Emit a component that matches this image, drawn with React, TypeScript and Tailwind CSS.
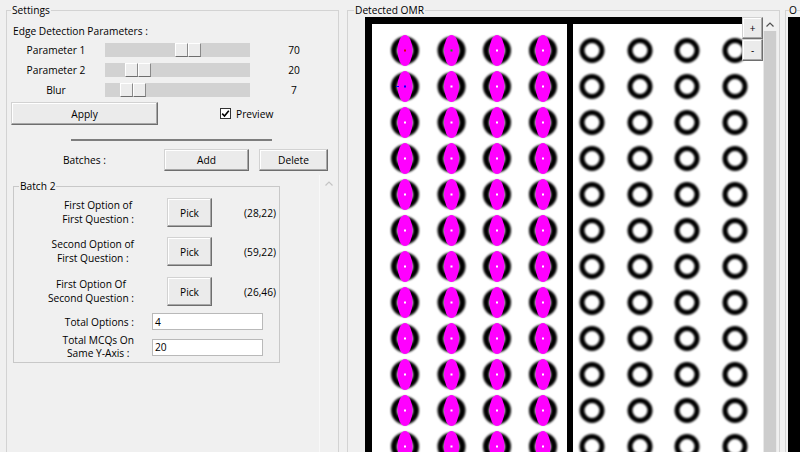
import React from "react";

const btn =
  "flex items-center justify-center bg-[#ebebeb] border border-t-[#d2d2d2] border-l-[#d2d2d2] border-r-[#6e6e6e] border-b-[#6e6e6e] shadow-[inset_-1px_-1px_0_#a8a8a8,inset_1px_1px_0_#ffffff]";

// one trackbar row: label / track with thumb / value
function SliderRow({ label, offset, value }: { label: string; offset: number; value: number }) {
  return (
    <div className="flex h-[20px] items-center">
      <div className="w-[98px] text-center">{label}</div>
      <div className="flex h-[14px] w-[145px] bg-[#d2d2d2]">
        <div className="flex h-full w-[26px]" style={{ marginLeft: offset }}>
          <span className="flex-1 border border-t-white border-l-white border-r-[#8a8a8a] border-b-[#6e6e6e] bg-[#ececec]" />
          <span className="flex-1 border border-t-white border-l-white border-r-[#8a8a8a] border-b-[#6e6e6e] bg-[#ececec]" />
        </div>
      </div>
      <div className="flex-1 text-center">{value}</div>
    </div>
  );
}

function PickRow({ lines, coord, mt }: { lines: string[]; coord: string; mt: string }) {
  return (
    <div className={`flex h-[29px] items-center ${mt}`}>
      <div className="w-[120px] text-right">
        <span className="inline-block text-center leading-[13.5px]">
          {lines.map((l) => (
            <div key={l}>{l}</div>
          ))}
        </span>
      </div>
      <button className={`${btn} ml-[33px] h-[29px] w-[45px]`}>Pick</button>
      <div className="w-[64px] text-right">{coord}</div>
    </div>
  );
}

// the detected sheet, drawn as an image
function OmrSheet() {
  const rows = Array.from({ length: 12 }, (_, i) => 33.5 + 36 * i);
  const leftCols = [40, 86.5, 132, 178];
  const rightCols = [227, 275, 322, 370];
  return (
    <svg width="398" height="440" viewBox="0 0 398 440" className="block">
      <defs>
        <filter id="soft" x="-30%" y="-30%" width="160%" height="160%">
          <feGaussianBlur stdDeviation="1.2" />
        </filter>
      </defs>
      <rect width="398" height="440" fill="#ffffff" />
      <rect x="0" y="0" width="398" height="7" fill="#000" />
      <rect x="0" y="0" width="7" height="440" fill="#000" />
      <rect x="202" y="0" width="6" height="440" fill="#000" />
      {rows.map((cy, r) => (
        <g key={r}>
          {leftCols.map((cx, c) => (
            <g key={c}>
              <circle cx={cx} cy={cy} r="11" fill="none" stroke="#000" strokeWidth="6" filter="url(#soft)" />
              <ellipse cx={cx} cy={cy} rx="7.5" ry="15.5" fill="#ff00ff" />
              <rect
                x={cx - 1}
                y={cy - 1}
                width="2"
                height="2"
                fill={r === 0 && c === 0 ? "#e00000" : r === 0 && c === 1 ? "#00b000" : r === 1 && c === 0 ? "#0000ff" : "#ffffff"}
              />
              {r === 1 && c === 0 && <rect x={cx - 9} y={cy - 0.5} width="3" height="1" fill="#0000ff" />}
            </g>
          ))}
          {rightCols.map((cx, c) => (
            <circle key={c} cx={cx} cy={cy} r="10" fill="none" stroke="#000" strokeWidth="5" filter="url(#soft)" />
          ))}
        </g>
      ))}
    </svg>
  );
}

export default function App() {
  return (
    <div className="flex h-[452px] w-[800px] overflow-hidden bg-[#f0f0f0] pt-[3px] font-['Open_Sans',sans-serif] text-[10.2px] leading-[14px] text-black">
      {/* Settings */}
      <fieldset className="ml-[6px] h-[470px] w-[333px] min-w-0 shrink-0 border border-[#d3d3d3]">
        <legend className="ml-[4px] px-[1px] leading-[14px]">Settings</legend>
        <div className="mt-[7px] pl-[6px]">Edge Detection Parameters :</div>
        <div className="mt-[2px]">
          <SliderRow label="Parameter 1" offset={70} value={70} />
          <SliderRow label="Parameter 2" offset={20} value={20} />
          <SliderRow label="Blur" offset={15} value={7} />
        </div>
        <div className="mt-[2px] flex h-[23px] items-center">
          <button className={`${btn} ml-[4px] h-[23px] w-[147px]`}>Apply</button>
          <span className="ml-[62px] flex h-[11px] w-[11px] items-center justify-center border border-[#333] bg-white">
            <svg width="9" height="9" viewBox="0 0 9 9">
              <path d="M1.2 4.6 L3.5 7 L7.8 1.8" fill="none" stroke="#000" strokeWidth="1.6" />
            </svg>
          </span>
          <span className="ml-[5px]">Preview</span>
        </div>
        <div className="ml-[64px] mt-[14px] h-[2px] w-[201px] bg-[#7d7d7d]" />
        <div className="mt-[8px] flex h-[22px] items-center">
          <div className="w-[157px] pl-[56px]">Batches :</div>
          <button className={`${btn} h-[22px] w-[85px]`}>Add</button>
          <button className={`${btn} ml-[10px] h-[22px] w-[69px]`}>Delete</button>
        </div>

        {/* scrollable batch area */}
        <div className="mt-[4px] flex">
          <div className="w-[312px]">
            <fieldset className="ml-[6px] mt-[4px] w-[267px] min-w-0 border border-[#c8c8c8] pb-[1px]">
              <legend className="ml-[5px] px-[1px] leading-[14px]">Batch 2</legend>
              <PickRow lines={["First Option of", "First Question :"]} coord="(28,22)" mt="mt-[5px]" />
              <PickRow lines={["Second Option of", "First Question :"]} coord="(59,22)" mt="mt-[10px]" />
              <PickRow lines={["First Option Of", "Second Question :"]} coord="(26,46)" mt="mt-[11px]" />
              <div className="mt-[7px] flex h-[17px] items-center">
                <div className="w-[120px] text-right">Total Options :</div>
                <div className="ml-[18px] flex h-[17px] w-[111px] items-center border border-[#b9b9b9] bg-white pl-[2px]">4</div>
              </div>
              <div className="mt-[3px] flex h-[28px] items-center">
                <div className="w-[120px] text-right">
                  <span className="inline-block text-center leading-[13px]">
                    <div>Total MCQs On</div>
                    <div>Same Y-Axis :</div>
                  </span>
                </div>
                <div className="ml-[18px] flex h-[17px] w-[111px] items-center border border-[#b9b9b9] bg-white pl-[2px]">20</div>
              </div>
            </fieldset>
          </div>
          <div className="h-[290px] w-[18px] border-l border-[#f8f8f8]">
            <div className="flex h-[17px] items-center justify-center">
              <svg width="8" height="5" viewBox="0 0 8 5">
                <path d="M0.5 4.5 L4 1 L7.5 4.5" fill="none" stroke="#c4c4c4" strokeWidth="1.2" />
              </svg>
            </div>
          </div>
        </div>
      </fieldset>

      {/* Detected OMR */}
      <fieldset className="ml-[8px] h-[470px] w-[433px] min-w-0 shrink-0 border border-[#d3d3d3]">
        <legend className="ml-[6px] px-[1px] leading-[14px]">Detected OMR</legend>
        <div className="flex pl-[17px]">
          <div className="relative h-[440px] w-[398px] overflow-hidden bg-white">
            <OmrSheet />
            <button className={`${btn} absolute right-0 top-0 h-[22px] w-[21px] text-[10px]`}>+</button>
            <button className={`${btn} absolute right-0 top-[22px] h-[22px] w-[21px] text-[10px]`}>-</button>
          </div>
          <div className="flex h-[440px] w-[14px] flex-col bg-[#e9e9e9]">
            <div className="flex h-[14px] items-center justify-center bg-[#f0f0f0]">
              <svg width="8" height="5" viewBox="0 0 8 5">
                <path d="M0.5 4.5 L4 1 L7.5 4.5" fill="none" stroke="#505050" strokeWidth="1.2" />
              </svg>
            </div>
            <div className="mx-[1px] flex-1 bg-[#cdcdcd]" />
          </div>
        </div>
      </fieldset>

      {/* next panel, only its edge is inside the window */}
      <fieldset className="ml-[5px] h-[470px] min-w-0 flex-1 overflow-hidden border border-r-0 border-[#d3d3d3]">
        <legend className="ml-[3px] px-0 leading-[14px]">O</legend>
        <div className="ml-[2px] h-[440px] bg-black" />
      </fieldset>
    </div>
  );
}
